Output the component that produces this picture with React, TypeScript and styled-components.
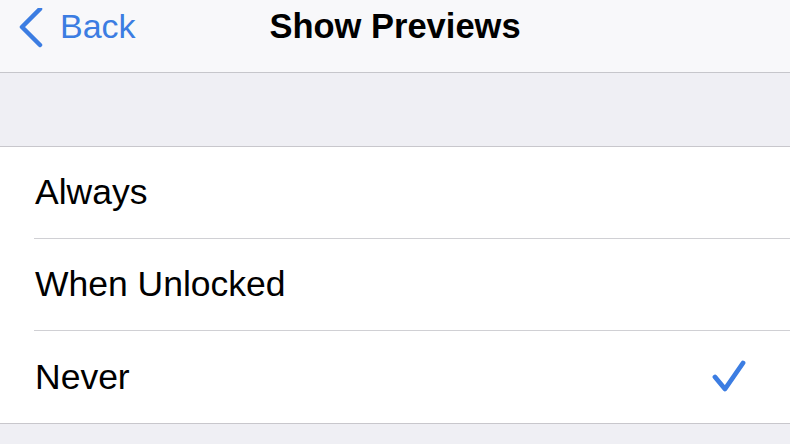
import styled, { createGlobalStyle } from "styled-components";

const GlobalStyle = createGlobalStyle`
  html, body {
    margin: 0;
    padding: 0;
    background: #efeff4;
    font-family: "Liberation Sans", Arial, sans-serif;
  }
`;

const Screen = styled.div`
  width: 790px;
  height: 444px;
  display: flex;
  flex-direction: column;
  background: #efeff4;
  overflow: hidden;
`;

const NavBar = styled.div`
  height: 73px;
  display: grid;
  grid-template-columns: 1fr auto 1fr;
  align-items: start;
  padding-top: 9px;
  box-sizing: border-box;
  background: #f8f8fa;
  border-bottom: 1px solid #c6c6cb;
  flex-shrink: 0;
`;

const BackButton = styled.div`
  display: flex;
  align-items: flex-start;
  gap: 14px;
  padding-left: 18px;
  color: #3c7de2;
  font-size: 34px;
  line-height: 34px;
  svg {
    margin-top: -1px;
  }
`;

const Title = styled.div`
  font-size: 34.5px;
  line-height: 34px;
  font-weight: bold;
  color: #000;
`;

const Spacer = styled.div`
  height: 73px;
  flex-shrink: 0;
`;

const List = styled.div`
  background: #fff;
  border-top: 1px solid #c8c7cc;
  border-bottom: 1px solid #c8c7cc;
`;

const Row = styled.div`
  padding-left: 34px;
  display: flex;
`;

const RowInner = styled.div<{ $last?: boolean }>`
  flex: 1;
  height: ${(p) => (p.$last ? "92px" : "91px")};
  display: flex;
  align-items: center;
  justify-content: space-between;
  padding-left: 1px;
  padding-right: 42px;
  border-bottom: ${(p) => (p.$last ? "none" : "1px solid #d0d0d4")};
  font-size: 35.5px;
  color: #000;
`;

const options = ["Always", "When Unlocked", "Never"];
const selected = "Never";

export default function App() {
  return (
    <>
      <GlobalStyle />
      <Screen>
        <NavBar>
          <BackButton>
            <svg width="28" height="40" viewBox="0 0 28 40">
              <path
                d="M22 1 L4 19 L22 37"
                fill="none"
                stroke="#3c7de2"
                strokeWidth="4.5"
                strokeLinecap="round"
                strokeLinejoin="round"
              />
            </svg>
            <span>Back</span>
          </BackButton>
          <Title>Show Previews</Title>
          <div />
        </NavBar>
        <Spacer />
        <List>
          {options.map((o, i) => (
            <Row key={o}>
              <RowInner $last={i === options.length - 1}>
                <span>{o}</span>
                {o === selected && (
                  <svg width="36" height="34" viewBox="0 0 36 34">
                    <path
                      d="M3 17 L13 29 L31 3"
                      fill="none"
                      stroke="#3c7de2"
                      strokeWidth="4.8"
                      strokeLinecap="round"
                      strokeLinejoin="round"
                    />
                  </svg>
                )}
              </RowInner>
            </Row>
          ))}
        </List>
      </Screen>
    </>
  );
}
